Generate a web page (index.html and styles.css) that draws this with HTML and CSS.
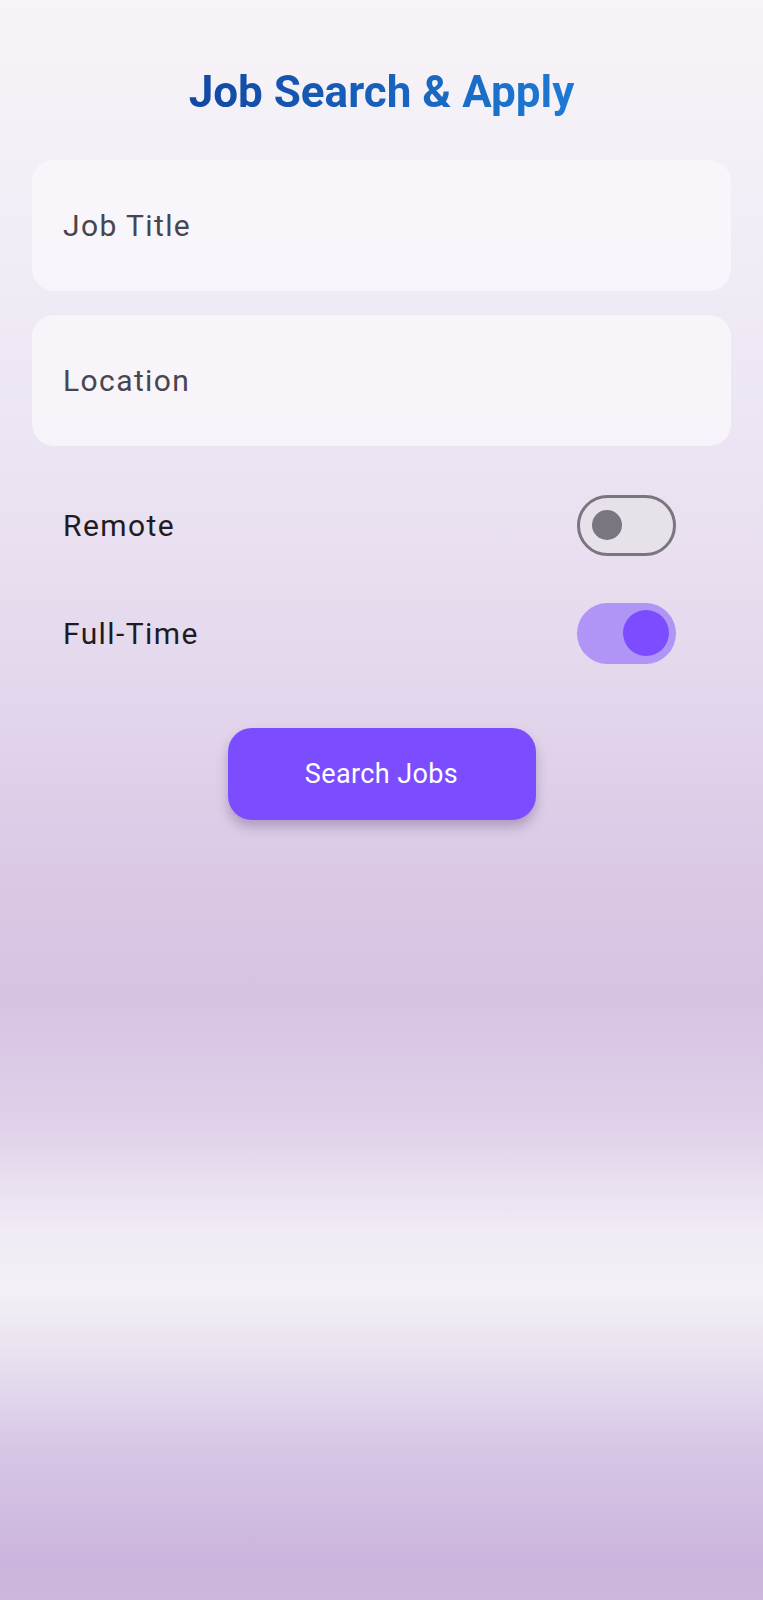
FILE: index.html
```html
<!DOCTYPE html>
<html>
<head>
<meta charset="utf-8">
<link rel="stylesheet" href="styles.css">
</head>
<body>
<main class="page">
  <h1 class="title">Job Search &amp; Apply</h1>
  <div class="field"><span class="field-label">Job Title</span></div>
  <div class="field"><span class="field-label">Location</span></div>
  <div class="toggle-row">
    <span class="toggle-label">Remote</span>
    <span class="switch switch-off"><span class="thumb"></span></span>
  </div>
  <div class="toggle-row">
    <span class="toggle-label">Full-Time</span>
    <span class="switch switch-on"><span class="thumb"></span></span>
  </div>
  <div class="actions">
    <button class="search-btn">Search Jobs</button>
  </div>
</main>
</body>
</html>
```

FILE: styles.css
```css
html, body {
  margin: 0;
  padding: 0;
}
body {
  width: 763px;
  height: 1600px;
  font-family: Roboto, "Noto Sans", sans-serif;
  background: linear-gradient(180deg,
    #f7f4f8 0px,
    #f1ecf6 250px,
    #ebe2f1 500px,
    #e2d6ec 700px,
    #d9c7e4 900px,
    #d6c3e3 1000px,
    #e0d2ea 1130px,
    #f0ebf4 1230px,
    #f4f0f6 1290px,
    #e8e0ef 1360px,
    #d6c6e6 1450px,
    #ccb5dc 1560px,
    #cdb7dd 1600px);
}
.page {
  display: flex;
  flex-direction: column;
  padding: 0 32px;
}
.title {
  margin: 64px 0 0;
  text-align: center;
  font-size: 44px;
  font-weight: 700;
  line-height: 56px;
  background: linear-gradient(90deg, #1248a2, #1d7ad4);
  -webkit-background-clip: text;
  background-clip: text;
  color: transparent;
  align-self: center;
}
.field {
  margin-top: 24px;
  height: 131px;
  border-radius: 22px;
  background: rgba(250, 248, 252, 0.75);
  display: flex;
  align-items: center;
  padding-left: 31px;
}
.title + .field {
  margin-top: 40px;
}
.field-label {
  font-size: 30px;
  letter-spacing: 1.4px;
  color: #49454f;
}
.toggle-row {
  display: flex;
  align-items: center;
  justify-content: space-between;
  padding: 0 55px 0 31px;
  height: 108px;
}
.field + .toggle-row {
  margin-top: 25px;
}
.toggle-label {
  font-size: 30px;
  letter-spacing: 1.4px;
  color: #1f1b24;
}
.switch {
  box-sizing: border-box;
  width: 99px;
  height: 61px;
  border-radius: 31px;
  display: flex;
  align-items: center;
}
.switch-off {
  background: #e7e1ea;
  border: 3.5px solid #7a757f;
  padding-left: 12px;
}
.switch-off .thumb {
  width: 30px;
  height: 30px;
  border-radius: 50%;
  background: #7a757f;
}
.switch-on {
  background: #b094f6;
  justify-content: flex-end;
  padding-right: 7px;
}
.switch-on .thumb {
  width: 46px;
  height: 46px;
  border-radius: 50%;
  background: #7c4dff;
}
.actions {
  display: flex;
  justify-content: center;
  margin-top: 41px;
}
.search-btn {
  width: 308px;
  height: 92px;
  border: none;
  border-radius: 24px;
  background: #7c4dff;
  color: #ffffff;
  font-family: Roboto, "Noto Sans", sans-serif;
  font-size: 27px;
  letter-spacing: 0.4px;
  box-shadow: 0 7px 12px rgba(60, 30, 90, 0.28);
}
```
